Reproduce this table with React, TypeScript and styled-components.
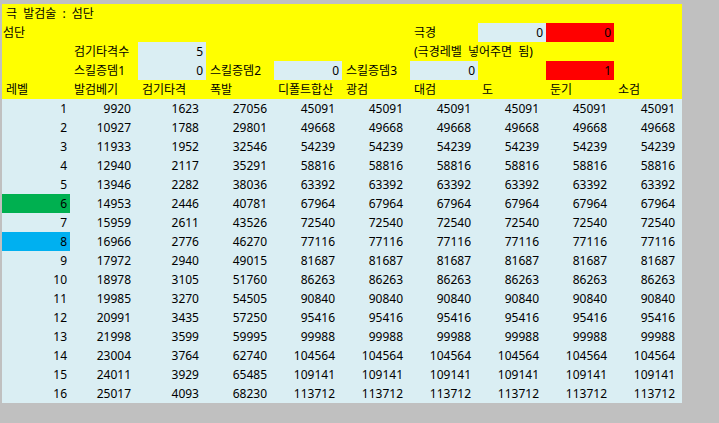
import React from "react";
import styled, { createGlobalStyle } from "styled-components";

const GlobalStyle = createGlobalStyle`
  html, body {
    margin: 0;
    padding: 0;
    background: #c0c0c0;
  }
  body {
    font-family: "Noto Sans", "Noto Sans CJK KR", sans-serif;
    font-size: 12px;
    color: #000;
  }
`;

const Page = styled.div`
  padding: 4px 0 0 2px;
  width: 719px;
  height: 423px;
  box-sizing: border-box;
`;

const Sheet = styled.div`
  width: 680px;
  display: flex;
  flex-direction: column;
`;

const Block = styled.div<{ $bg: string }>`
  display: grid;
  grid-template-columns: repeat(10, 68px);
  grid-auto-rows: 19px;
  background: ${(p) => p.$bg};
`;

const Cell = styled.div<{
  $col: number;
  $row?: number;
  $span?: number;
  $right?: boolean;
  $fill?: string;
  $pl?: number;
  $pr?: number;
}>`
  grid-column: ${(p) => p.$col} / span ${(p) => p.$span ?? 1};
  ${(p) => (p.$row ? `grid-row: ${p.$row};` : "")}
  background: ${(p) => p.$fill ?? "transparent"};
  line-height: 19px;
  white-space: nowrap;
  overflow: visible;
  word-spacing: 3px;
  text-align: ${(p) => (p.$right ? "right" : "left")};
  padding-left: ${(p) => p.$pl ?? 0}px;
  padding-right: ${(p) => p.$pr ?? 0}px;
`;

const INPUT = "#daeef3";
const RED = "#ff0000";
const YELLOW = "#ffff00";

const Label: React.FC<{ col: number; row: number; span?: number; pl?: number; children: React.ReactNode }> = ({
  col,
  row,
  span,
  pl = 4,
  children,
}) => (
  <Cell $col={col} $row={row} $span={span} $pl={pl}>
    {children}
  </Cell>
);

const Input: React.FC<{ col: number; row: number; fill: string; value: number }> = ({ col, row, fill, value }) => (
  <Cell $col={col} $row={row} $right $fill={fill} $pr={3}>
    {value}
  </Cell>
);

const headers = ["레벨", "발검베기", "검기타격", "폭발", "디폴트합산", "광검", "대검", "도", "둔기", "소검"];

const rows: [number, number, number, number][] = [
  [9920, 1623, 27056, 45091],
  [10927, 1788, 29801, 49668],
  [11933, 1952, 32546, 54239],
  [12940, 2117, 35291, 58816],
  [13946, 2282, 38036, 63392],
  [14953, 2446, 40781, 67964],
  [15959, 2611, 43526, 72540],
  [16966, 2776, 46270, 77116],
  [17972, 2940, 49015, 81687],
  [18978, 3105, 51760, 86263],
  [19985, 3270, 54505, 90840],
  [20991, 3435, 57250, 95416],
  [21998, 3599, 59995, 99988],
  [23004, 3764, 62740, 104564],
  [24011, 3929, 65485, 109141],
  [25017, 4093, 68230, 113712],
];

const levelFill: Record<number, string> = {
  6: "#00b050",
  8: "#00b0f0",
};

export default function App() {
  return (
    <>
      <GlobalStyle />
      <Page>
        <Sheet>
          <Block $bg={YELLOW}>
            <Label col={1} row={1} span={10} pl={4}>
              극 발검술 : 섬단
            </Label>

            <Label col={1} row={2} pl={1}>
              섬단
            </Label>
            <Label col={7} row={2}>
              극경
            </Label>
            <Input col={8} row={2} fill={INPUT} value={0} />
            <Input col={9} row={2} fill={RED} value={0} />

            <Label col={2} row={3}>
              검기타격수
            </Label>
            <Input col={3} row={3} fill={INPUT} value={5} />
            <Label col={7} row={3} span={3}>
              (극경레벨 넣어주면 됨)
            </Label>

            <Label col={2} row={4}>
              스킬증뎀1
            </Label>
            <Input col={3} row={4} fill={INPUT} value={0} />
            <Label col={4} row={4}>
              스킬증뎀2
            </Label>
            <Input col={5} row={4} fill={INPUT} value={0} />
            <Label col={6} row={4}>
              스킬증뎀3
            </Label>
            <Input col={7} row={4} fill={INPUT} value={0} />
            <Input col={9} row={4} fill={RED} value={1} />

            {headers.map((h, i) => (
              <Label key={h} col={i + 1} row={5}>
                {h}
              </Label>
            ))}
          </Block>

          <Block $bg={INPUT}>
            {rows.map(([a, b, c, d], i) => {
              const lv = i + 1;
              const values = [a, b, c, d, d, d, d, d, d];
              return (
                <React.Fragment key={lv}>
                  <Cell $col={1} $row={lv} $right $pr={3} $fill={levelFill[lv]}>
                    {lv}
                  </Cell>
                  {values.map((v, j) => (
                    <Cell key={j} $col={j + 2} $row={lv} $right $pr={7}>
                      {v}
                    </Cell>
                  ))}
                </React.Fragment>
              );
            })}
          </Block>
        </Sheet>
      </Page>
    </>
  );
}
